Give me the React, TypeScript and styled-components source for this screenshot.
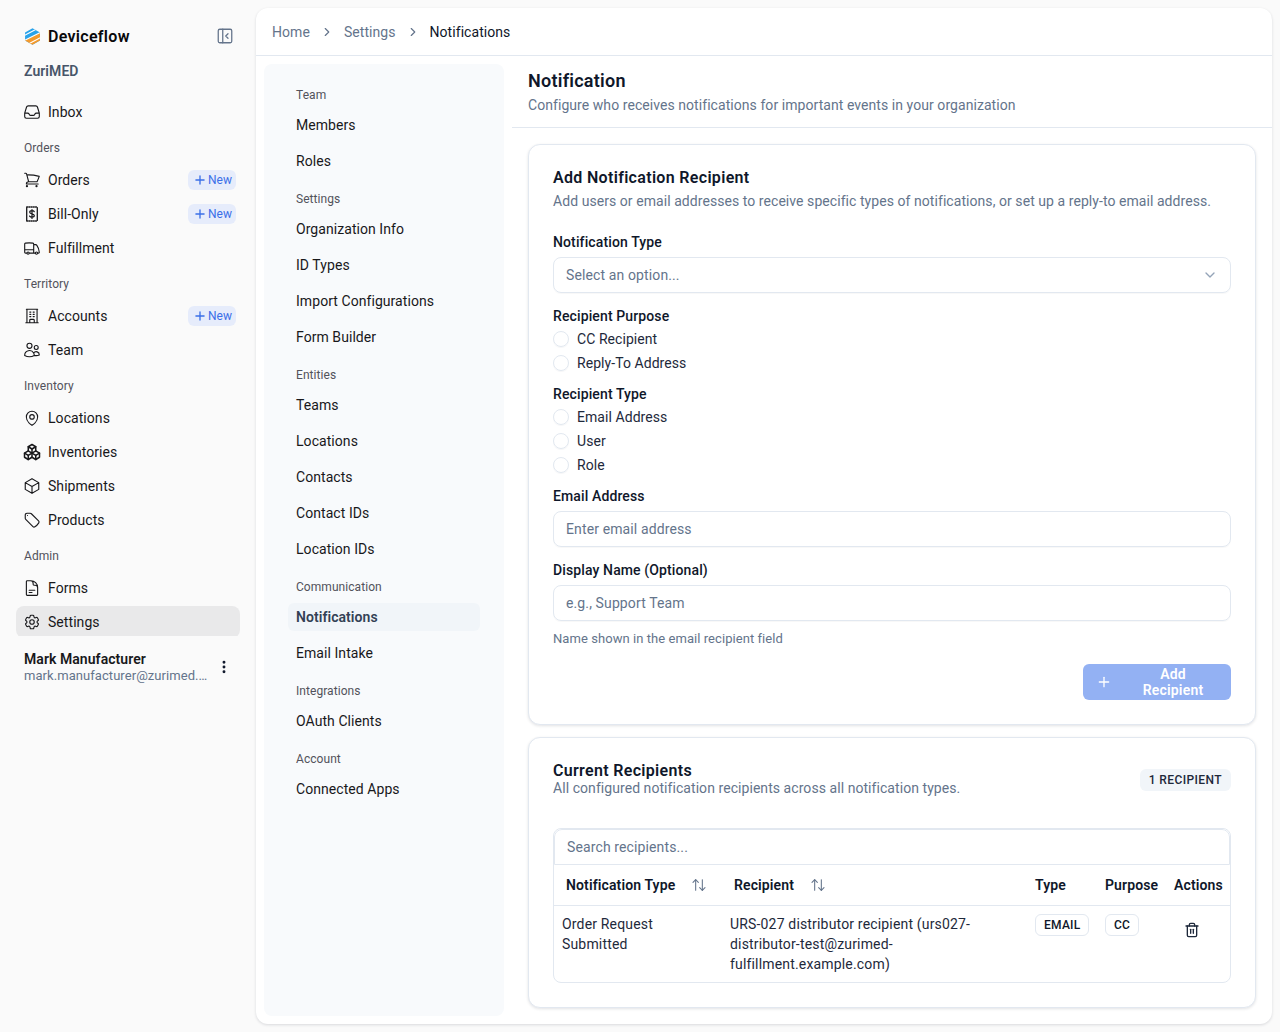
import React from 'react';
import styled, { createGlobalStyle } from 'styled-components';
import { Plus, PanelLeftClose, ChevronDown, ChevronRight, ArrowUpDown, Trash2, MoreVertical } from 'lucide-react';
import { HiOutlineInbox, HiOutlineShoppingCart, HiOutlineTruck, HiOutlineBuildingOffice, HiOutlineUsers, HiOutlineMapPin, HiOutlineCube, HiOutlineTag, HiOutlineDocumentText, HiOutlineCog6Tooth } from 'react-icons/hi2';
import { TbPackages } from 'react-icons/tb';

const Global = createGlobalStyle`
  html, body { margin: 0; padding: 0; background: #fafafa; height: 1032px; overflow: hidden; }
  * { box-sizing: border-box; }
  body { font-family: "Roboto", "Liberation Sans", sans-serif; font-size: 14px; color: #0f172a; letter-spacing: .06px; }
`;

const Shell = styled.div`display: flex; height: 1032px; background: #fafafa;`;
const Side = styled.aside`width: 256px; flex: none; display: flex; flex-direction: column; padding: 0 16px;`;
const Brand = styled.div`height: 56px; padding: 16px 6px 0 8px; display: flex; align-items: center; gap: 7px; font-size: 16px; font-weight: 600; letter-spacing: .3px; color: #09090b;`;
const BrandName = styled.span`flex: 1;`;
const Org = styled.div`height: 20px; margin-top: 5px; padding-left: 8px; font-size: 14px; font-weight: 600; color: #475569; line-height: 20px;`;
const Nav = styled.nav`height: 542px; margin-top: 13px; overflow: hidden;`;
const NavLabel = styled.div`height: 32px; padding: 8px 8px 0; font-size: 12px; color: #52525b; line-height: 20px;`;
const NavRow = styled.div<{ $active?: boolean }>`height: 32px; margin: 2px 0; display: flex; align-items: center; gap: 8px; padding: 0 4px 0 8px; border-radius: 8px; color: #18181b; background: ${p => p.$active ? '#e9e9ea' : 'transparent'}; > svg:first-child { flex: none; margin: 0 -1px; }`;
const NavText = styled.span`flex: 1;`;
const NewBadge = styled.span`display: inline-flex; align-items: center; height: 20px; width: 48px; padding-left: 5px; gap: 1px; border-radius: 6px; background: #e6ecfb; color: #3b6fe8; font-size: 12px;`;
const UserBox = styled.div`height: 62px; display: flex; align-items: center; padding: 0 8px;`;
const UserText = styled.div`flex: 1; min-width: 0;`;
const UserName = styled.div`font-size: 14px; font-weight: 600; color: #18181b; line-height: 18px;`;
const UserMail = styled.div`font-size: 13px; color: #64748b; line-height: 16px; white-space: nowrap; overflow: hidden; text-overflow: ellipsis; width: 184px;`;

const Main = styled.main`margin: 8px 8px 8px 0; flex: 1; min-width: 0; background: #fff; border-radius: 12px; box-shadow: 0 1px 3px rgba(15,23,42,.14); overflow: hidden; display: flex; flex-direction: column;`;
const Crumbs = styled.header`height: 48px; flex: none; border-bottom: 1px solid #e2e8f0; display: flex; align-items: center; padding: 0 16px; gap: 10px; color: #64748b;`;
const CrumbNow = styled.span`color: #0f172a;`;
const Body = styled.div`flex: 1; display: flex; min-height: 0;`;
const SubNav = styled.div`width: 240px; flex: none; margin: 8px; background: #f8fafc; border-radius: 8px; padding: 20px 24px 0;`;
const SubLabel = styled.div`height: 32px; font-size: 12px; color: #52525b; line-height: 20px; padding: 1px 8px 0;`;
const SubRow = styled.div<{ $active?: boolean }>`height: 36px; margin: -6px 0 6px; line-height: 30px; padding: 0 8px; border-radius: 6px; color: #18181b;
  ${p => p.$active ? 'background: #f1f5f9; font-weight: 600; height: 28px; line-height: 28px; margin: -5px 0 13px; color: #334155;' : ''}`;
const Content = styled.div`flex: 1; min-width: 0; display: flex; flex-direction: column;`;
const PageHead = styled.div`height: 72px; flex: none; border-bottom: 1px solid #e2e8f0; padding: 13px 16px 0;`;
const PageTitle = styled.h1`margin: 0; font-size: 18px; line-height: 24px; font-weight: 600; letter-spacing: .25px; color: #0f172a;`;
const PageSub = styled.p`margin: 2px 0 0; font-size: 14px; line-height: 20px; color: #64748b;`;
const Scroll = styled.div`padding: 16px; display: flex; flex-direction: column; gap: 12px;`;
const Card = styled.section`border: 1px solid #e2e8f0; border-radius: 12px; background: #fff; box-shadow: 0 1px 3px rgba(15,23,42,.12); padding: 24px;`;
const CardTitle = styled.h2`margin: 0; font-size: 16px; line-height: 18px; font-weight: 600; letter-spacing: .32px; color: #0f172a;`;
const CardSub = styled.p`margin: 4px 0 0; font-size: 14px; line-height: 20px; color: #64748b;`;
const FieldLabel = styled.div<{ $top: number }>`margin-top: ${p => p.$top}px; font-size: 14px; line-height: 20px; font-weight: 500; letter-spacing: .12px; color: #0f172a;`;
const Input = styled.div`margin-top: 5px; height: 36px; border: 1px solid #e2e8f0; border-radius: 8px; display: flex; align-items: center; justify-content: space-between; padding: 0 12px; color: #64748b; letter-spacing: .12px; box-shadow: 0 1px 1px rgba(15,23,42,.03);`;
const Radio = styled.div`height: 24px; display: flex; align-items: center; gap: 8px; color: #1e293b;`;
const RadioDot = styled.span`width: 16px; height: 16px; border-radius: 50%; border: 1px solid #e2e8f0; box-shadow: 0 1px 1px rgba(15,23,42,.04);`;
const RadioGroup = styled.div`margin-top: 1px;`;
const Hint = styled.div`margin-top: 9px; font-size: 13px; line-height: 18px; color: #64748b;`;
const Actions = styled.div`display: flex; justify-content: flex-end; margin-top: 16px;`;
const AddBtn = styled.button`height: 36px; width: 148px; border: 0; border-radius: 6px; background: #93b1f3; color: #fff; font: inherit; font-weight: 600; letter-spacing: .2px; display: flex; align-items: center; gap: 16px; padding: 0 13px;`;
const RecHead = styled.div`display: flex; justify-content: space-between; align-items: center;`;
const Count = styled.span`height: 22px; padding: 0 9px; border-radius: 6px; background: #f1f5f9; font-size: 12px; font-weight: 500; letter-spacing: .4px; line-height: 22px; color: #1e293b;`;
const CardSubTight = styled.p`margin: -1px 0 0; font-size: 14px; line-height: 18px; color: #64748b;`;
const TableBox = styled.div`margin-top: 31px; border: 1px solid #e2e8f0; border-radius: 8px; overflow: hidden;`;
const Search = styled.div`height: 36px; border: 1px solid #e2e8f0; border-radius: 8px 8px 0 0; padding: 0 12px; line-height: 34px; color: #64748b; letter-spacing: .12px;`;
const Table = styled.table`width: 100%; border-collapse: collapse; table-layout: fixed;`;
const Th = styled.th<{ $w: number }>`width: ${p => p.$w}px; height: 40px; padding: 0 0 0 12px; text-align: left; font-weight: 600; font-size: 14px; letter-spacing: .12px; color: #0f172a; border-bottom: 1px solid #e2e8f0; white-space: nowrap;`;
const ThInner = styled.span`display: inline-flex; align-items: center; gap: 16px; svg { color: #64748b; }`;
const Td = styled.td`padding: 8px; vertical-align: top; line-height: 20px; letter-spacing: .17px; color: #1e293b;`;
const BadgeTd = styled(Td)`padding-left: 12px;`;
const ActionTd = styled(Td)`padding: 16px 0 0 22px; svg { display: block; }`;
const Tag2 = styled.span`display: inline-block; height: 22px; line-height: 20px; padding: 0 8px; border: 1px solid #e2e8f0; border-radius: 6px; font-size: 12px; font-weight: 500; letter-spacing: .25px; color: #0f172a;`;

const Receipt = (p: { size?: number }) => (
  <svg width={p.size} height={p.size} viewBox="0 0 18 18" fill="none" stroke="currentColor" strokeWidth="1.3" strokeLinecap="round">
    <path d="M3.7 2.6v12.8M14.3 2.6v12.8" />
    <path d="M3.7 2h10.6M3.7 16h10.6" strokeDasharray="1 1.2" />
    <path d="M11.3 6.7c-.3-.7-1.2-1-2.3-1-1.3 0-2.3.6-2.3 1.6 0 2.2 4.6 1 4.6 3.3 0 1-1 1.6-2.3 1.6-1.2 0-2-.4-2.4-1.1M9 4.6v8.8" strokeWidth="1.2" />
  </svg>
);

type It = { icon: React.ComponentType<any>; label: string; isNew?: boolean; active?: boolean };
const main: (string | It)[] = [
  { icon: HiOutlineInbox, label: 'Inbox' }, 'Orders',
  { icon: HiOutlineShoppingCart, label: 'Orders', isNew: true },
  { icon: Receipt, label: 'Bill-Only', isNew: true },
  { icon: HiOutlineTruck, label: 'Fulfillment' }, 'Territory',
  { icon: HiOutlineBuildingOffice, label: 'Accounts', isNew: true },
  { icon: HiOutlineUsers, label: 'Team' }, 'Inventory',
  { icon: HiOutlineMapPin, label: 'Locations' },
  { icon: TbPackages, label: 'Inventories' },
  { icon: HiOutlineCube, label: 'Shipments' },
  { icon: HiOutlineTag, label: 'Products' }, 'Admin',
  { icon: HiOutlineDocumentText, label: 'Forms' },
  { icon: HiOutlineCog6Tooth, label: 'Settings', active: true },
];
const sub: [string, string[]][] = [
  ['Team', ['Members', 'Roles']],
  ['Settings', ['Organization Info', 'ID Types', 'Import Configurations', 'Form Builder']],
  ['Entities', ['Teams', 'Locations', 'Contacts', 'Contact IDs', 'Location IDs']],
  ['Communication', ['Notifications', 'Email Intake']],
  ['Integrations', ['OAuth Clients']],
  ['Account', ['Connected Apps']],
];

const Logo = () => (
  <svg width="17" height="17" viewBox="0 0 16 16">
    <defs><clipPath id="hex"><path d="M8 .3 15 4.2v7.6L8 15.7 1 11.800V4.200z" /></clipPath></defs>
    <g clipPath="url(#hex)">
      <rect width="16" height="16" fill="#2aa3ea" />
      <path d="M0 12 16 4V16H0z" fill="#f59a2c" />
      <path d="M0 7.200 11 1.500M0 11.800 16 3.800M5 14.500 16 8.800" stroke="#fff" strokeWidth="1" fill="none" />
    </g>
  </svg>
);

export default function App() {
  return (
    <>
      <Global />
      <Shell>
        <Side>
          <Brand><Logo /><BrandName>Deviceflow</BrandName><PanelLeftClose size={18} color="#64748b" strokeWidth={1.7} /></Brand>
          <Org>ZuriMED</Org>
          <Nav>
            {main.map((m, i) => typeof m === 'string' ? <NavLabel key={i}>{m}</NavLabel> : (
              <NavRow key={i} $active={m.active}>
                <m.icon size={18} />
                <NavText>{m.label}</NavText>
                {m.isNew && <NewBadge><Plus size={14} strokeWidth={2.3} />New</NewBadge>}
              </NavRow>
            ))}
          </Nav>
          <UserBox>
            <UserText>
              <UserName>Mark Manufacturer</UserName>
              <UserMail>mark.manufacturer@zurimed.com</UserMail>
            </UserText>
            <MoreVertical size={16} strokeWidth={2.4} />
          </UserBox>
        </Side>
        <Main>
          <Crumbs>
            <span>Home</span><ChevronRight size={14} /><span>Settings</span><ChevronRight size={14} /><CrumbNow>Notifications</CrumbNow>
          </Crumbs>
          <Body>
            <SubNav>
              {sub.map(([l, items]) => (
                <React.Fragment key={l}>
                  <SubLabel>{l}</SubLabel>
                  {items.map(t => <SubRow key={t} $active={t === 'Notifications'}>{t}</SubRow>)}
                </React.Fragment>
              ))}
            </SubNav>
            <Content>
              <PageHead>
                <PageTitle>Notification</PageTitle>
                <PageSub>Configure who receives notifications for important events in your organization</PageSub>
              </PageHead>
              <Scroll>
                <Card>
                  <CardTitle>Add Notification Recipient</CardTitle>
                  <CardSub>Add users or email addresses to receive specific types of notifications, or set up a reply-to email address.</CardSub>
                  <FieldLabel $top={21}>Notification Type</FieldLabel>
                  <Input>Select an option...<ChevronDown size={16} color="#94a3b8" /></Input>
                  <FieldLabel $top={13}>Recipient Purpose</FieldLabel>
                  <RadioGroup>
                    <Radio><RadioDot />CC Recipient</Radio>
                    <Radio><RadioDot />Reply-To Address</Radio>
                  </RadioGroup>
                  <FieldLabel $top={9}>Recipient Type</FieldLabel>
                  <RadioGroup>
                    <Radio><RadioDot />Email Address</Radio>
                    <Radio><RadioDot />User</Radio>
                    <Radio><RadioDot />Role</Radio>
                  </RadioGroup>
                  <FieldLabel $top={9}>Email Address</FieldLabel>
                  <Input>Enter email address</Input>
                  <FieldLabel $top={13}>Display Name (Optional)</FieldLabel>
                  <Input>e.g., Support Team</Input>
                  <Hint>Name shown in the email recipient field</Hint>
                  <Actions><AddBtn><Plus size={16} />Add Recipient</AddBtn></Actions>
                </Card>
                <Card>
                  <RecHead>
                    <div>
                      <CardTitle>Current Recipients</CardTitle>
                      <CardSubTight>All configured notification recipients across all notification types.</CardSubTight>
                    </div>
                    <Count>1 RECIPIENT</Count>
                  </RecHead>
                  <TableBox>
                    <Search>Search recipients...</Search>
                    <Table>
                      <thead>
                        <tr>
                          <Th $w={168}><ThInner>Notification Type<ArrowUpDown size={16} strokeWidth={1.6} /></ThInner></Th>
                          <Th $w={301}><ThInner>Recipient<ArrowUpDown size={16} strokeWidth={1.6} /></ThInner></Th>
                          <Th $w={70}>Type</Th>
                          <Th $w={69}>Purpose</Th>
                          <Th $w={70}>Actions</Th>
                        </tr>
                      </thead>
                      <tbody>
                        <tr>
                          <Td>Order Request Submitted</Td>
                          <Td>URS-027 distributor recipient (urs027-distributor-test@zurimed-fulfillment.example.com)</Td>
                          <BadgeTd><Tag2>EMAIL</Tag2></BadgeTd>
                          <BadgeTd><Tag2>CC</Tag2></BadgeTd>
                          <ActionTd><Trash2 size={16} /></ActionTd>
                        </tr>
                      </tbody>
                    </Table>
                  </TableBox>
                </Card>
              </Scroll>
            </Content>
          </Body>
        </Main>
      </Shell>
    </>
  );
}
